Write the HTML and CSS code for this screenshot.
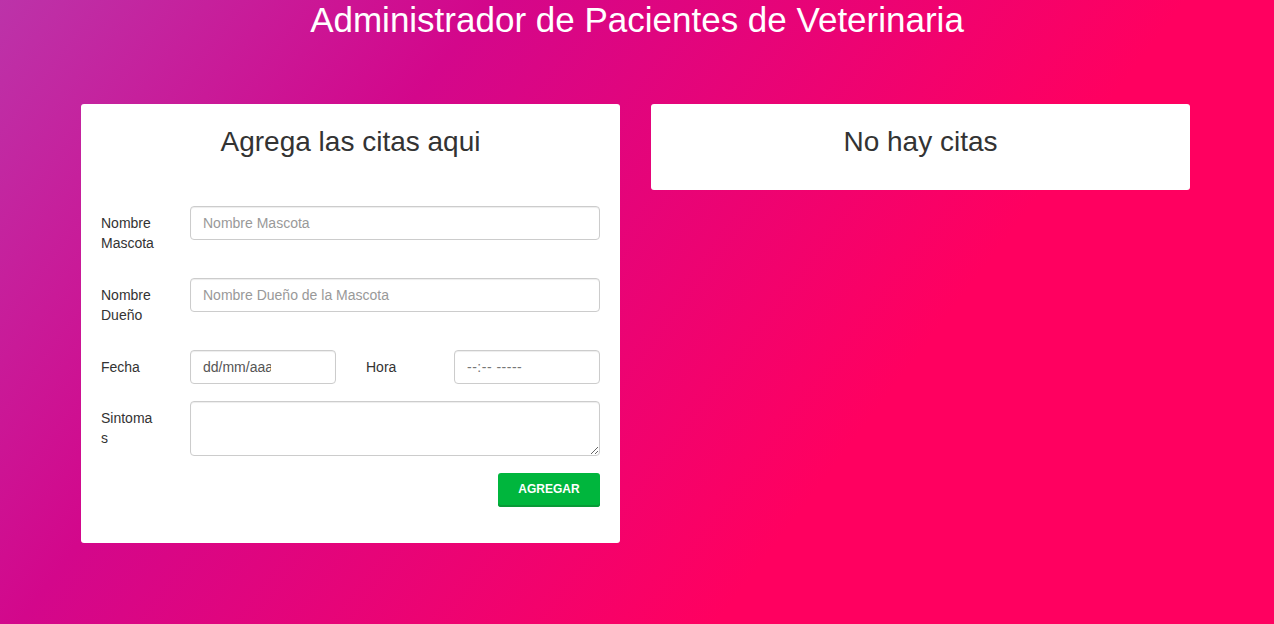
FILE: index.html
```html
<!DOCTYPE html>
<html lang="es">
<head>
<meta charset="utf-8">
<title>Administrador de Pacientes de Veterinaria</title>
<link rel="stylesheet" href="styles.css">
</head>
<body>
<h1 class="page-title">Administrador de Pacientes de Veterinaria</h1>
<main class="layout">
  <section class="card">
    <h2 class="card-title">Agrega las citas aqui</h2>
    <form class="form">
      <div class="form-row">
        <label class="form-label" for="mascota">Nombre Mascota</label>
        <input class="form-control" id="mascota" type="text" placeholder="Nombre Mascota">
      </div>
      <div class="form-row">
        <label class="form-label" for="duenio">Nombre Dueño</label>
        <input class="form-control" id="duenio" type="text" placeholder="Nombre Dueño de la Mascota">
      </div>
      <div class="form-row form-row-split">
        <label class="form-label" for="fecha">Fecha</label>
        <input class="form-control form-date" id="fecha" type="text" value="dd/mm/aaaa">
        <label class="form-label form-label-inner" for="hora">Hora</label>
        <input class="form-control form-time" id="hora" type="text" value="--:-- -----">
      </div>
      <div class="form-row">
        <label class="form-label" for="sintomas">Sintomas</label>
        <textarea class="form-control form-textarea" id="sintomas"></textarea>
      </div>
      <div class="form-actions">
        <button class="btn-add" type="button">Agregar</button>
      </div>
    </form>
  </section>
  <section class="card card-empty">
    <h2 class="card-title">No hay citas</h2>
  </section>
</main>
</body>
</html>
```

FILE: styles.css
```css
* {
  box-sizing: border-box;
}

html, body {
  margin: 0;
  padding: 0;
}

body {
  min-height: 100vh;
  font-family: "Liberation Sans", Arial, Helvetica, sans-serif;
  font-size: 14px;
  line-height: 20px;
  color: #333;
  background: linear-gradient(127deg, #bc33a9 0%, #d3078b 28%, #ff0060 68%, #ff0060 100%);
}

.page-title {
  margin: 0;
  font-size: 35px;
  line-height: 40px;
  font-weight: 400;
  color: #fff;
  text-align: center;
}

.layout {
  display: grid;
  grid-template-columns: 539px 539px;
  column-gap: 31px;
  justify-content: center;
  align-items: start;
  padding-right: 3px;
  margin-top: 64px;
}

.card {
  background: #fff;
  border-radius: 3px;
  padding: 21px 20px 21px;
}

.card-title {
  margin: 0 0 11px;
  font-size: 28px;
  line-height: 33px;
  font-weight: 400;
  color: #333;
  text-align: center;
}

.form {
  margin-top: 48px;
}

.form-row {
  display: grid;
  grid-template-columns: 89px 1fr;
  align-items: start;
  margin-bottom: 15px;
}

.form-row-split {
  grid-template-columns: 89px 146px 1fr 146px;
}

.form-label {
  display: block;
  width: 55px;
  padding-top: 7px;
  padding-bottom: 10px;
  font-weight: 400;
  overflow-wrap: anywhere;
  color: #333;
}

.form-row-split .form-label {
  padding-bottom: 9px;
}

.form-label-inner {
  width: auto;
  padding-left: 30px;
}

.form-control {
  display: block;
  width: 100%;
  height: 34px;
  padding: 6px 12px;
  font-family: inherit;
  font-size: 14px;
  line-height: 20px;
  color: #555;
  background: #fff;
  border: 1px solid #ccc;
  border-radius: 4px;
  box-shadow: inset 0 1px 1px rgba(0, 0, 0, 0.075);
  outline: none;
}

.form-control::placeholder {
  color: #999;
  opacity: 1;
}

.form-date {
  padding-right: 64px;
}

.form-time {
  color: #777;
  letter-spacing: 0.5px;
}

.form-textarea {
  height: 55px;
  resize: vertical;
}

.form-actions {
  display: flex;
  justify-content: flex-end;
  margin-bottom: 15px;
}

.btn-add {
  height: 34px;
  width: 102px;
  padding: 0 10px 2px;
  font-family: inherit;
  font-size: 12px;
  font-weight: 700;
  text-transform: uppercase;
  color: #fff;
  background: #00b63d;
  border: none;
  border-radius: 3px;
  box-shadow: inset 0 -2px 0 #079a36;
  cursor: pointer;
}
```
